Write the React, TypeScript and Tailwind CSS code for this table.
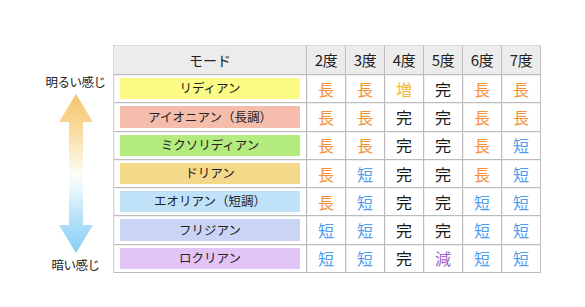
const degrees = ['2度', '3度', '4度', '5度', '6度', '7度']

type Mode = {
  name: string;
  bg: string;
  marks: string[];
}

const modes: Mode[] = [
  { name: 'リディアン', bg: 'bg-[#fbfb86]', marks: ['長', '長', '増', '完', '長', '長'] },
  { name: 'アイオニアン（長調）', bg: 'bg-[#f4bdac]', marks: ['長', '長', '完', '完', '長', '長'] },
  { name: 'ミクソリディアン', bg: 'bg-[#b3eb7e]', marks: ['長', '長', '完', '完', '長', '短'] },
  { name: 'ドリアン', bg: 'bg-[#f5d98b]', marks: ['長', '短', '完', '完', '長', '短'] },
  { name: 'エオリアン（短調）', bg: 'bg-[#bfe2f9]', marks: ['長', '短', '完', '完', '短', '短'] },
  { name: 'フリジアン', bg: 'bg-[#cad5f6]', marks: ['短', '短', '完', '完', '短', '短'] },
  { name: 'ロクリアン', bg: 'bg-[#e3c4f7]', marks: ['短', '短', '完', '減', '短', '短'] },
]

const markColor: Record<string, string> = {
  '長': 'text-[#f2923a]',
  '短': 'text-[#4f9cf2]',
  '増': 'text-[#f4b93a]',
  '減': 'text-[#9a62cc]',
  '完': 'text-[#1a1a1a]',
}

const cell = 'flex items-center justify-center border-r border-b border-[#bcbcbc] shadow-[inset_1px_1px_0_#f0f0f0]'

const Arrow = () => (
  <svg width="34" height="159" viewBox="0 0 34 159">
    <defs>
      <linearGradient id="ag" x1="0" y1="0" x2="0" y2="1">
        <stop offset="0" stopColor="#f5c46e" />
        <stop offset="0.2" stopColor="#f8d896" />
        <stop offset="0.5" stopColor="#fdfcf6" />
        <stop offset="0.58" stopColor="#eef8fd" />
        <stop offset="0.8" stopColor="#b2e0f8" />
        <stop offset="1" stopColor="#86cbf4" />
      </linearGradient>
    </defs>
    <path d="M17 0 L34 28 L24 28 L24 131 L34 131 L17 159 L0 131 L10 131 L10 28 L0 28 Z" fill="url(#ag)" />
  </svg>
)

const App = () => {
  return (
    <div className="w-[585px] h-[307px] bg-white relative font-['Noto_Sans_CJK_JP',sans-serif] text-[#222]">
      <div className="flex pt-[45px]">
        {/* LEFT SCALE */}
        <div className="w-[113px] flex flex-col items-center pl-[38px] pt-[29px]">
          <div className="text-[12.5px] leading-[16px] tracking-[-0.5px]">明るい感じ</div>
          <div className="mt-[4px]">
            <Arrow />
          </div>
          <div className="text-[12.5px] leading-[16px] mt-[4px] tracking-[-0.5px]">暗い感じ</div>
        </div>

        {/* TABLE */}
        <div className="grid grid-cols-[193px_repeat(6,39px)] grid-rows-[29px_repeat(7,28.3px)] border-t border-l border-[#d6d6d6]">
          <div className={`${cell} bg-[#ececec] text-[14px]`}>モード</div>
          {degrees.map((d) => (
            <div key={d} className={`${cell} bg-[#ececec] text-[15px] tracking-[-0.5px]`}>
              {d}
            </div>
          ))}
          {modes.map((m) => (
            <>
              <div key={m.name} className={`${cell} px-[6px] py-[3px] items-stretch`}>
                <div className={`${m.bg} w-full flex items-center justify-center text-[12.5px]`}>{m.name}</div>
              </div>
              {m.marks.map((k, i) => (
                <div key={m.name + i} className={`${cell} text-[16px] ${markColor[k]}`}>
                  {k}
                </div>
              ))}
            </>
          ))}
        </div>
      </div>
    </div>
  )
}

export default App
